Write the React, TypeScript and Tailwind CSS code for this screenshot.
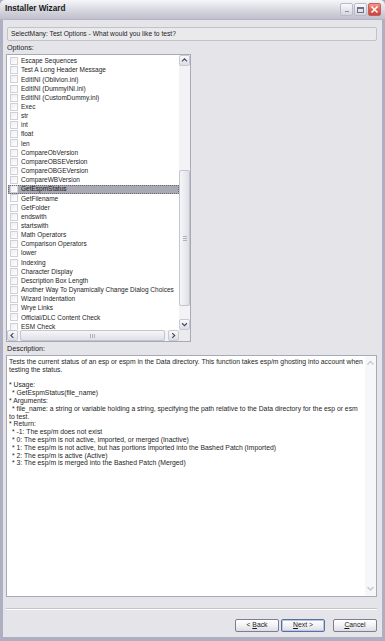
import React from 'react';

const options = [
  'Escape Sequences',
  'Test A Long Header Message',
  'EditINI (Oblivion.ini)',
  'EditINI (DummyINI.ini)',
  'EditINI (CustomDummy.ini)',
  'Exec',
  'str',
  'int',
  'float',
  'len',
  'CompareObVersion',
  'CompareOBSEVersion',
  'CompareOBGEVersion',
  'CompareWBVersion',
  'GetEspmStatus',
  'GetFilename',
  'GetFolder',
  'endswith',
  'startswith',
  'Math Operators',
  'Comparison Operators',
  'lower',
  'Indexing',
  'Character Display',
  'Description Box Length',
  'Another Way To Dynamically Change Dialog Choices',
  'Wizard Indentation',
  'Wrye Links',
  'Official/DLC Content Check',
  'ESM Check',
];

const selected = 'GetEspmStatus';

// [text, indented]
const description: [string, boolean][] = [
  ['Tests the current status of an esp or espm in the Data directory. This function takes esp/m ghosting into account when', false],
  ['testing the status.', false],
  ['', false],
  ['* Usage:', false],
  ['* GetEspmStatus(file_name)', true],
  ['* Arguments:', false],
  ['* file_name: a string or variable holding a string, specifying the path relative to the Data directory for the esp or esm', true],
  ['to test.', false],
  ['* Return:', false],
  ['* -1: The esp/m does not exist', true],
  ['* 0: The esp/m is not active, imported, or merged (Inactive)', true],
  ['* 1: The esp/m is not active, but has portions imported into the Bashed Patch (Imported)', true],
  ['* 2: The esp/m is active (Active)', true],
  ['* 3: The esp/m is merged into the Bashed Patch (Merged)', true],
];

type Dir = 'up' | 'down' | 'left' | 'right';

const arrowPaths: Record<Dir, string> = {
  up: 'M2.5 6.5 L5.5 3.5 L8.5 6.5',
  down: 'M2.5 4 L5.5 7 L8.5 4',
  left: 'M6.5 2.5 L3.5 5.5 L6.5 8.5',
  right: 'M4 2.5 L7 5.5 L4 8.5',
};

const ScrollButton = ({ dir, faint = false }: { dir: Dir; faint?: boolean }) => (
  <div
    className={
      faint
        ? 'w-[11px] h-[11px] shrink-0 flex items-center justify-center'
        : 'w-[11px] h-[11px] shrink-0 flex items-center justify-center rounded-[2px] border border-[#c9c9d3] bg-gradient-to-b from-[#fbfbfc] to-[#dcdce4]'
    }
  >
    <svg width="11" height="11" viewBox="0 0 11 11">
      <path
        d={arrowPaths[dir]}
        fill="none"
        stroke={faint ? '#c8c8d0' : '#3d4a66'}
        strokeWidth="1.4"
      />
    </svg>
  </div>
);

const XpButton = ({
  label,
  isDefault = false,
}: {
  label: [string, string, string];
  isDefault?: boolean;
}) => (
  <div
    className={
      'w-[44px] h-[13px] rounded-[2px] flex items-center justify-center text-[6.8px] text-[#1a1a1a] bg-gradient-to-b from-[#ffffff] via-[#f2f2f5] to-[#dcdce3] ' +
      (isDefault ? 'border border-[#5c6f9c] shadow-[inset_0_0_0_1px_#b8c8e8]' : 'border border-[#7a8094]')
    }
  >
    <span className="whitespace-pre">
      {label[0]}
      <span className="underline">{label[1]}</span>
      {label[2]}
    </span>
  </div>
);

export default function App() {
  return (
    <div className="w-[385px] h-[641px] flex flex-col bg-[#a9aabd] font-['Liberation_Sans',Arial,sans-serif] text-[#1c1c1c] overflow-hidden">
      {/* title bar */}
      <div className="h-[20px] shrink-0 flex items-center justify-between pl-[5px] pr-[4px] rounded-t-[5px] bg-gradient-to-b from-[#f6f6f9] via-[#d9d9e1] to-[#c0c0cd] border-b border-[#b4b4c4]">
        <span className="text-[8.2px] font-bold text-[#181818]">Installer Wizard</span>
        <div className="flex gap-[1px]">
          <div className="w-[13px] h-[13px] rounded-[2px] border border-[#b9b9c8] bg-gradient-to-b from-[#f9f9fb] to-[#d4d4de] flex items-end justify-center pb-[3px]">
            <div className="w-[4px] h-[1.5px] bg-[#8c8ca4]" />
          </div>
          <div className="w-[13px] h-[13px] rounded-[2px] border border-[#b9b9c8] bg-gradient-to-b from-[#f9f9fb] to-[#d4d4de] flex items-center justify-center">
            <div className="w-[7px] h-[6px] border border-[#6e6e88] border-t-2" />
          </div>
          <div className="w-[13px] h-[13px] rounded-[2px] border border-[#c06060] bg-gradient-to-b from-[#f29a86] via-[#de6050] to-[#c8463a] flex items-center justify-center">
            <svg width="9" height="9" viewBox="0 0 9 9">
              <path d="M1.5 1.5 L7.5 7.5 M7.5 1.5 L1.5 7.5" stroke="#ffffff" strokeWidth="1.6" />
            </svg>
          </div>
        </div>
      </div>

      {/* frame + body */}
      <div className="flex-1 border-x-[3px] border-b-[4px] border-[#aeafc2]">
        <div className="h-full bg-[#e5e5e9] flex flex-col pt-[7px] pl-[3px]">
          <div className="ml-[1px] w-[370px] h-[14px] shrink-0 rounded-[2px] border border-[#c2c2cb] bg-[#eaeaed] flex items-center pl-[3px] text-[6.7px]">
            SelectMany: Test Options - What would you like to test?
          </div>

          <div className="mt-[3px] h-[9px] flex items-center text-[7.2px] pl-[1px]">Options:</div>

          {/* options list */}
          <div className="mt-[1px] w-[185px] h-[288px] shrink-0 border border-[#a5a9b8] bg-white flex flex-col">
            <div className="flex-1 flex min-h-0">
              <div className="flex-1 overflow-hidden pt-[1.5px] pl-[1px]">
                {options.map((o) => (
                  <div
                    key={o}
                    className={
                      'h-[9.16px] flex items-center pl-[2px] gap-[3px] whitespace-nowrap text-[6.5px] ' +
                      (o === selected ? 'bg-[#a9a9b4] outline outline-dotted outline-[#6a6a78] -outline-offset-1' : '')
                    }
                  >
                    <div className="w-[8px] h-[8px] shrink-0 border border-[#cfd0d8] bg-gradient-to-br from-[#eeeef2] to-white" />
                    <span>{o}</span>
                  </div>
                ))}
              </div>
              {/* vertical scrollbar */}
              <div className="w-[11px] flex flex-col bg-[#f3f3f6]">
                <ScrollButton dir="up" />
                <div className="h-[104px]" />
                <div className="h-[136px] rounded-[2px] border border-[#c4c4cf] bg-gradient-to-r from-[#f7f7f9] to-[#dfdfe7] flex items-center justify-center">
                  <div className="flex flex-col gap-[1px]">
                    <div className="w-[4px] h-[1px] bg-[#b0b0bf]" />
                    <div className="w-[4px] h-[1px] bg-[#b0b0bf]" />
                    <div className="w-[4px] h-[1px] bg-[#b0b0bf]" />
                  </div>
                </div>
                <div className="flex-1" />
                <ScrollButton dir="down" />
              </div>
            </div>
            {/* horizontal scrollbar */}
            <div className="h-[11px] shrink-0 flex bg-[#f3f3f6]">
              <ScrollButton dir="left" />
              <div className="w-[2px]" />
              <div className="w-[145px] rounded-[2px] border border-[#c4c4cf] bg-gradient-to-b from-[#f7f7f9] to-[#dfdfe7] flex items-center justify-center">
                <div className="flex gap-[1px]">
                  <div className="w-[1px] h-[4px] bg-[#b0b0bf]" />
                  <div className="w-[1px] h-[4px] bg-[#b0b0bf]" />
                  <div className="w-[1px] h-[4px] bg-[#b0b0bf]" />
                </div>
              </div>
              <div className="flex-1" />
              <ScrollButton dir="right" />
              <div className="w-[11px] bg-[#ebebee]" />
            </div>
          </div>

          <div className="mt-[3px] h-[8px] flex items-center text-[7.2px] pl-[1px]">Description:</div>

          {/* description */}
          <div className="mt-[2px] w-[371px] h-[242px] shrink-0 border border-[#a5a9b8] bg-white flex">
            <div className="flex-1 pt-[2px] pl-[2px] text-[6.8px] text-[#262626]">
              {description.map(([t, indent], i) => (
                <div key={i} className={'h-[7.8px] leading-[7.8px] whitespace-nowrap ' + (indent ? 'pl-[3px]' : '')}>
                  {t}
                </div>
              ))}
            </div>
            <div className="w-[11px] flex flex-col justify-between bg-[#f7f7f9] py-[2px]">
              <ScrollButton dir="up" faint />
              <ScrollButton dir="down" faint />
            </div>
          </div>

          <div className="mt-[11px] w-[371px] h-[2px] border-t border-[#c3c3cc] border-b border-b-white" />

          <div className="mt-[9px] w-[371px] flex justify-end">
            <div className="flex">
              <XpButton label={['< ', 'B', 'ack']} />
              <div className="w-[2px]" />
              <XpButton label={['', 'N', 'ext >']} isDefault />
              <div className="w-[8px]" />
              <XpButton label={['', 'C', 'ancel']} />
            </div>
          </div>
        </div>
      </div>
    </div>
  );
}
